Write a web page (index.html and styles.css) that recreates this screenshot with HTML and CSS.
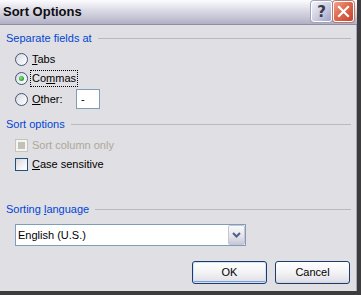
FILE: index.html
```html
<!DOCTYPE html>
<html lang="en">
<head>
  <meta charset="UTF-8">
  <title>Sort Options</title>
  <link rel="stylesheet" href="styles.css">
</head>
<body>
  <div class="window">
    <div class="titlebar">
      <div class="title">Sort Options</div>
      <div class="caption-buttons">
        <div class="cbtn help">?</div>
        <div class="cbtn close">
          <svg width="13" height="13" viewBox="0 0 13 13">
            <path d="M2 2 L11 11 M11 2 L2 11" stroke="#fff" stroke-width="2.2" stroke-linecap="square" fill="none"/>
          </svg>
        </div>
      </div>
    </div>

    <div class="content">
      <div class="group-head"><span>Separate fields at</span><div class="rule"></div></div>
      <div class="opts">
        <div class="row">
          <span class="radio"></span>
          <span class="lbl"><u>T</u>abs</span>
        </div>
        <div class="row">
          <span class="radio checked"></span>
          <span class="lbl focused">Co<u>m</u>mas</span>
        </div>
        <div class="row other">
          <span class="radio"></span>
          <span class="lbl wide"><u>O</u>ther:</span>
          <div class="textbox">-</div>
        </div>
      </div>

      <div class="group-head second"><span>Sort options</span><div class="rule"></div></div>
      <div class="opts">
        <div class="row">
          <span class="check disabled"></span>
          <span class="lbl gray">Sort column only</span>
        </div>
        <div class="row">
          <span class="check"></span>
          <span class="lbl"><u>C</u>ase sensitive</span>
        </div>
      </div>

      <div class="group-head third"><span>Sorting <u>l</u>anguage</span><div class="rule"></div></div>
      <div class="combo">
        <div class="combo-text">English (U.S.)</div>
        <div class="combo-btn">
          <svg width="9" height="6" viewBox="0 0 9 6">
            <path d="M1 1 L4.5 4.5 L8 1" stroke="#4d6185" stroke-width="2" fill="none"/>
          </svg>
        </div>
      </div>

      <div class="buttons">
        <div class="btn default">OK</div>
        <div class="btn">Cancel</div>
      </div>
    </div>
  </div>
</body>
</html>
```

FILE: styles.css
```css
body {
  margin: 0;
  font-family: "Liberation Sans", Arial, sans-serif;
  font-size: 11px;
  color: #000;
  background: #e0dfe3;
}
.window {
  width: 361px;
  height: 295px;
  box-sizing: border-box;
  border-right: 4px solid #3c3c3e;
  border-bottom: 4px solid #3c3c3e;
  display: flex;
  flex-direction: column;
}
.titlebar {
  height: 24px;
  flex: none;
  display: flex;
  align-items: flex-start;
  justify-content: space-between;
  border-bottom: 1px solid #8e8da6;
  background: linear-gradient(#fcfcfe 0%, #ebebf2 22%, #d6d5e0 50%, #c5c4d4 75%, #b1b0c4 100%);
}
.title {
  font-size: 13px;
  font-weight: bold;
  line-height: 24px;
  padding-left: 3px;
  color: #0e0e14;
}
.caption-buttons {
  display: flex;
  gap: 1px;
  padding-top: 1px;
  padding-right: 3px;
}
.cbtn {
  width: 21px;
  height: 21px;
  box-sizing: border-box;
  border: 1px solid #fff;
  border-radius: 3px;
  display: flex;
  align-items: center;
  justify-content: center;
}
.help {
  background: linear-gradient(135deg, #f3f4fa 0%, #c9cbe0 55%, #9fa2c3 100%);
  box-shadow: 0 0 0 1px #a3a2b8;
  font-size: 15px;
  font-weight: bold;
  color: #3a3a48;
  font-family: "DejaVu Sans", sans-serif;
}
.close {
  background: linear-gradient(135deg, #f0a08c 0%, #df6a50 45%, #c2442c 100%);
  box-shadow: 0 0 0 1px #b9786b;
}
.content {
  flex: 1;
  padding: 7px 5px 0 6px;
  border-right: 1px solid #a9a8b2;
  display: flex;
  flex-direction: column;
}
.group-head {
  height: 13px;
  line-height: 13px;
  display: flex;
  align-items: center;
  gap: 6px;
  color: #0046d5;
}
.group-head u {
  text-decoration: underline;
}
.rule {
  flex: 1;
  height: 1px;
  background: #bab9c1;
}
.group-head.second {
  margin-top: 8px;
}
.group-head.third {
  margin-top: 29px;
}
.opts {
  margin-top: 5px;
  padding-left: 9px;
}
.row {
  height: 19px;
  display: flex;
  align-items: center;
}
.row.other {
  height: 22px;
}
.radio {
  width: 13px;
  height: 13px;
  box-sizing: border-box;
  border: 1px solid #3f5777;
  border-radius: 50%;
  background: linear-gradient(135deg, #d6d5dc 0%, #eceef2 50%, #ffffff 100%);
  margin-right: 2px;
  position: relative;
}
.radio.checked::after {
  content: "";
  position: absolute;
  left: 3px;
  top: 3px;
  width: 5px;
  height: 5px;
  border-radius: 50%;
  background: radial-gradient(circle at 40% 40%, #8ae48a 0%, #3cb43c 50%, #1c8a1c 100%);
}
.check {
  width: 13px;
  height: 13px;
  box-sizing: border-box;
  border: 1px solid #1c5180;
  background: linear-gradient(135deg, #d8d7dd 0%, #f2f2f4 60%, #ffffff 100%);
  margin-right: 2px;
  position: relative;
}
.check.disabled {
  border-color: #c6c4bc;
  background: #f4f4f2;
}
.check.disabled::after {
  content: "";
  position: absolute;
  left: 2px;
  top: 2px;
  width: 7px;
  height: 7px;
  background: #c3c1b6;
}
.lbl {
  padding: 1px;
  border: 1px dotted transparent;
  line-height: 13px;
}
.lbl.focused {
  border-color: #000;
}
.lbl.wide {
  width: 44px;
  box-sizing: border-box;
}
.lbl.gray {
  color: #aca899;
}
.textbox {
  margin-left: 2px;
  width: 24px;
  height: 20px;
  box-sizing: border-box;
  border: 1px solid #7f9db9;
  background: #fff;
  padding-left: 4px;
  line-height: 18px;
}
.combo {
  margin-top: 8px;
  margin-left: 9px;
  width: 231px;
  height: 22px;
  box-sizing: border-box;
  border: 1px solid #7f9db9;
  background: #fff;
  display: flex;
  align-items: stretch;
}
.combo-text {
  flex: 1;
  padding-left: 2px;
  line-height: 20px;
}
.combo-btn {
  width: 17px;
  box-sizing: border-box;
  border: 1px solid #c6c5d3;
  border-radius: 2px;
  background: linear-gradient(#f9f9fb 0%, #e3e2ea 60%, #c8c7d6 100%);
  display: flex;
  align-items: center;
  justify-content: center;
}
.buttons {
  margin-top: 15px;
  margin-right: 1px;
  display: flex;
  justify-content: flex-end;
  gap: 8px;
}
.btn {
  width: 75px;
  height: 23px;
  box-sizing: border-box;
  border: 1px solid #1d3c6a;
  border-radius: 3px;
  background: linear-gradient(#ffffff 0%, #f3f3f6 50%, #e2e1e9 90%, #d3d2de 100%);
  box-shadow: inset 0 -1px 0 #d6d5e0;
  text-align: center;
  line-height: 21px;
}
.btn.default {
  box-shadow: inset 0 0 0 1px #cee3fb, inset 0 -2px 0 #7da2ce;
}
```
